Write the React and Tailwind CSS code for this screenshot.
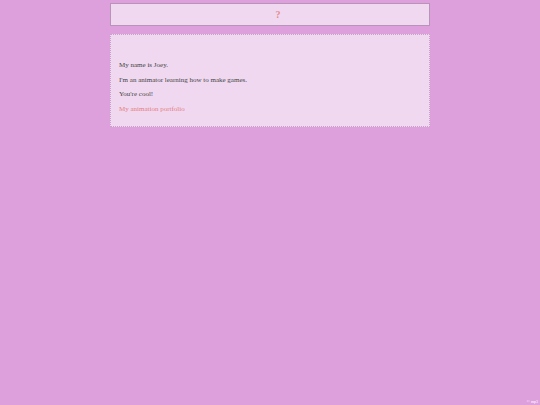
export default function App() {
  return (
    <div className="min-h-[405px] w-full bg-[#dda0dd] relative" style={{ fontFamily: '"Liberation Serif", serif' }}>
      <div className="mx-auto w-[320px] pt-[3px]">
        <div className="h-[23px] border border-[#b994b9] bg-[#f0d8f0] flex items-center justify-center pl-[16px]">
          <span className="text-[10px] font-bold text-[#e58a8f] leading-none">?</span>
        </div>
        <div className="mt-[8px] h-[93px] border border-dotted border-[#c4a4c4] bg-[#f0d8f0] px-[8px] pt-[23px] text-[7px] text-[#444] leading-[14.5px]">
          <p>My name is Joey.</p>
          <p>I'm an animator learning how to make games.</p>
          <p>You're cool!</p>
          <p className="text-[#e57e80]">My animation portfolio</p>
        </div>
      </div>
      <div className="absolute right-[2px] bottom-[1px] text-[4px] text-white leading-none">© mp3</div>
    </div>
  );
}
